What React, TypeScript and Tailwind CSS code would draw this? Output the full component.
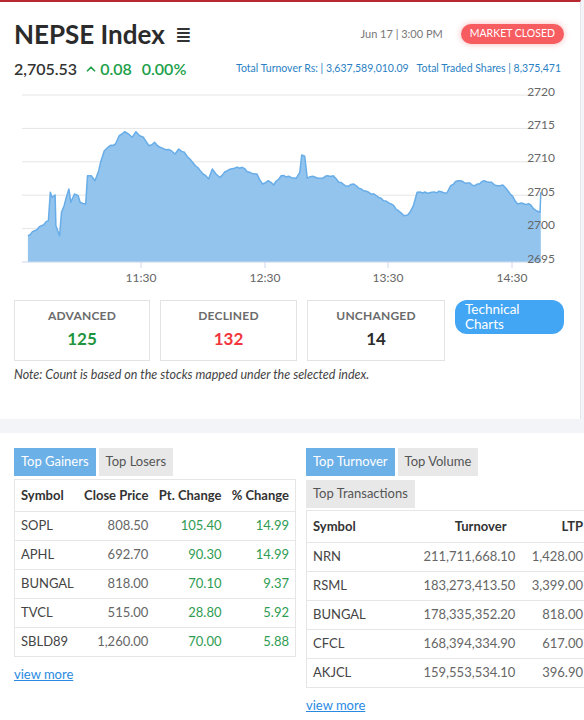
import { ChevronUp } from "lucide-react";

type GainerRow = {
  symbol: string;
  close: string;
  change: string;
  percent: string;
};

type TurnoverRow = {
  symbol: string;
  turnover: string;
  ltp: string;
};

const gainers: GainerRow[] = [
  { symbol: "SOPL", close: "808.50", change: "105.40", percent: "14.99" },
  { symbol: "APHL", close: "692.70", change: "90.30", percent: "14.99" },
  { symbol: "BUNGAL", close: "818.00", change: "70.10", percent: "9.37" },
  { symbol: "TVCL", close: "515.00", change: "28.80", percent: "5.92" },
  { symbol: "SBLD89", close: "1,260.00", change: "70.00", percent: "5.88" },
];

const turnovers: TurnoverRow[] = [
  { symbol: "NRN", turnover: "211,711,668.10", ltp: "1,428.00" },
  { symbol: "RSML", turnover: "183,273,413.50", ltp: "3,399.00" },
  { symbol: "BUNGAL", turnover: "178,335,352.20", ltp: "818.00" },
  { symbol: "CFCL", turnover: "168,394,334.90", ltp: "617.00" },
  { symbol: "AKJCL", turnover: "159,553,534.10", ltp: "396.90" },
];

// intraday index points, already in chart pixel space
const series: [number, number][] = [
  [27.9, 156.7], [48.4, 141.7], [50.3, 113.3], [52.1, 118.3], [55.1, 116],
  [55.9, 146.7], [59.6, 156.7], [61.5, 133.3], [64.1, 126.7], [68.9, 110],
  [70.8, 123.3], [74.5, 115], [78.2, 116.7], [80.1, 123.3], [85.7, 125],
  [87.5, 96.7], [91.2, 96.7], [95, 101.7], [98.7, 91.7], [100.6, 83.3],
  [104.3, 71.7], [108, 68.3], [115.5, 65], [119.2, 56.7], [124.8, 52.7],
  [128.5, 55], [132.2, 58.3], [135.9, 52.7], [139.7, 56.7], [143.4, 58.3],
  [149, 66.7], [154.6, 63.3], [160.1, 68.3], [165.7, 70.7], [171.3, 71.7],
  [175, 75], [178.8, 70], [184.4, 73.3], [189.9, 80], [195.5, 86.7],
  [203, 95], [208.6, 100], [212.3, 90], [216, 95], [219.7, 98.3],
  [227.2, 91.7], [234.6, 89.3], [242.1, 88.3], [249.5, 93.3], [257, 95],
  [262.6, 105], [268.2, 101.7], [273.7, 106], [281.2, 96.7], [288.6, 97.3],
  [296.1, 99.3], [299.8, 93.3], [301.7, 76], [304.7, 77.3], [307.3, 99.3],
  [312.8, 97.3], [320.3, 99.3], [327.7, 96.7], [333.3, 96.7], [338.9, 103.3],
  [348.2, 107.3], [353.8, 105], [361.3, 110], [368.7, 113.3], [376.2, 116.7],
  [383.6, 121.7], [391.1, 125], [398.5, 131.7], [404.1, 136.7], [407.8, 136],
  [413.4, 126.7], [417.1, 113.3], [422.7, 114], [432, 113.3], [441.3, 112.7],
  [446.9, 114], [450.7, 106.7], [458.1, 101.7], [467.4, 104], [474.9, 106.7],
  [484.2, 101.7], [491.6, 103.3], [497.2, 106.7], [502.8, 106], [510.2, 115],
  [517.7, 125], [521.4, 124], [530.7, 126], [536.3, 131.7], [540, 133.3],
  [540.8, 113.3],
];

const BASE_Y = 183;
const gridYs = [16, 49.4, 82.8, 116.2, 149.6, 183];
const yLabels = ["2720", "2715", "2710", "2705", "2700", "2695"];
const xTicks = [
  { x: 141, label: "11:30" },
  { x: 265, label: "12:30" },
  { x: 388, label: "13:30" },
  { x: 512, label: "14:30" },
];

// add a little tick-by-tick noise between the sampled points
function densify(points: [number, number][]) {
  const out: [number, number][] = [];
  for (let i = 0; i < points.length - 1; i++) {
    const [x0, y0] = points[i];
    const [x1, y1] = points[i + 1];
    out.push([x0, y0]);
    const steps = Math.max(0, Math.floor((x1 - x0) / 2.2));
    for (let s = 1; s < steps; s++) {
      const t = s / steps;
      const jitter = Math.sin(i * 7.3 + s * 2.1) * 0.9;
      out.push([x0 + (x1 - x0) * t, y0 + (y1 - y0) * t + jitter]);
    }
  }
  out.push(points[points.length - 1]);
  return out;
}

function IndexChart() {
  const pts = densify(series);
  const line = pts.map(([x, y], i) => `${i ? "L" : "M"}${x.toFixed(1)},${y.toFixed(1)}`).join(" ");
  const area = `${line} L${pts[pts.length - 1][0]},${BASE_Y} L${pts[0][0]},${BASE_Y} Z`;

  return (
    <svg width="584" height="212" viewBox="0 0 584 212" className="block">
      {gridYs.slice(0, 5).map((y) => (
        <line key={y} x1="22" x2="542" y1={y} y2={y} stroke="#e6e6e6" strokeWidth="1" />
      ))}
      <path d={area} fill="#92c4ee" />
      <path d={line} fill="none" stroke="#68ade8" strokeWidth="1.5" strokeLinejoin="round" />
      <line x1="22" x2="542" y1={BASE_Y} y2={BASE_Y} stroke="#ccd6eb" strokeWidth="1" />
      {xTicks.map((t) => (
        <g key={t.label}>
          <line x1={t.x} x2={t.x} y1={BASE_Y} y2={BASE_Y + 6} stroke="#ccd6eb" />
          <text x={t.x} y="203" textAnchor="middle" fontSize="12" fill="#666666">
            {t.label}
          </text>
        </g>
      ))}
      {gridYs.map((y, i) => (
        <text key={y} x="555" y={y + 0.5} textAnchor="end" fontSize="12" fill="#666666">
          {yLabels[i]}
        </text>
      ))}
    </svg>
  );
}

function StatBox({ label, value, color }: { label: string; value: string; color: string }) {
  return (
    <div className="flex h-[61px] flex-col items-center border border-[#e3e3e3] bg-white pt-[7px]">
      <div className="text-[12px] font-bold leading-4 tracking-[0.2px] text-[#6b6b6b]">{label}</div>
      <div className={`mt-[5px] text-[17px] font-bold leading-5 ${color}`}>{value}</div>
    </div>
  );
}

function Tab({ label, active }: { label: string; active?: boolean }) {
  return (
    <button
      type="button"
      className={
        active
          ? "h-[28px] bg-[#6cb0e8] px-[7px] text-[13px] text-white"
          : "h-[28px] bg-[#e8e8e8] px-[7px] text-[13px] text-[#555555]"
      }
    >
      {label}
    </button>
  );
}

export default function App() {
  return (
    <div className="h-[720px] w-[584px] overflow-hidden bg-[#f3f4f8] font-['Lato',sans-serif] text-[#333333]">
      {/* index summary card */}
      <div className="w-[581px] border-t-2 border-r border-t-[#b8292f] border-r-[#e4e6ec] bg-white pb-[36px]">
        <div className="mt-[15px] flex h-[34px] items-center justify-between pl-[14px] pr-[16px]">
          <div className="flex items-center gap-[10px]">
            <h1 className="text-[26px] font-bold leading-8 text-[#2b2b2b]">NEPSE Index</h1>
            <span className="text-[20px] leading-none text-[#333333]">≣</span>
          </div>
          <div className="flex items-center gap-[18px]">
            <span className="text-[11px] text-[#777777]">Jun 17 | 3:00 PM</span>
            <span className="flex h-[20px] items-center rounded-full bg-[#f65c60] px-[9px] text-[10.5px] text-white shadow-[0_0_6px_rgba(246,92,96,0.45)]">
              MARKET CLOSED
            </span>
          </div>
        </div>
        <div className="mt-[8px] flex h-[20px] items-center justify-between pl-[14px] pr-[19px]">
          <div className="flex items-center text-[16px] font-semibold">
            <span className="text-[#333333]">2,705.53</span>
            <ChevronUp className="ml-[7px] h-[14px] w-[14px] text-[#20a04a]" strokeWidth={3} />
            <span className="ml-[2px] text-[#20a04a]">0.08</span>
            <span className="ml-[10px] text-[#20a04a]">0.00%</span>
          </div>
          <div className="text-[10.5px] text-[#2a7fc4]">
            Total Turnover Rs: | 3,637,589,010.09
            <span className="ml-[8px]">Total Traded Shares | 8,375,471</span>
          </div>
        </div>
        <IndexChart />
        <div className="mt-[9px] grid grid-cols-[136px_137px_138px_109px] gap-[10px] px-[14px]">
          <StatBox label="ADVANCED" value="125" color="text-[#1e9440]" />
          <StatBox label="DECLINED" value="132" color="text-[#f2353b]" />
          <StatBox label="UNCHANGED" value="14" color="text-[#2b2b2b]" />
          <button
            type="button"
            className="flex h-[34px] flex-col items-start justify-center rounded-[12px] bg-[#42a6f5] px-[10px] text-left text-[13.5px] leading-[15px] text-white"
          >
            <span>Technical</span>
            <span>Charts</span>
          </button>
        </div>
        <p className="mt-[6px] px-[14px] text-[12.5px] italic leading-4 text-[#444444]">
          Note: Count is based on the stocks mapped under the selected index.
        </p>
      </div>

      {/* top movers */}
      <div className="mt-[14px] flex h-[300px] gap-[10px] bg-white pl-[14px] pt-[15px]">
        <div className="w-[282px] shrink-0">
          <div className="flex gap-[3px]">
            <Tab label="Top Gainers" active />
            <Tab label="Top Losers" />
          </div>
          <table className="mt-[3px] w-full border-collapse border border-[#e6e6e6] text-[13px]">
            <thead>
              <tr className="h-[32px]">
                <th className="pl-[6px] text-left font-bold text-[#333333]">Symbol</th>
                <th className="pr-[5px] text-right font-bold text-[#333333]">Close Price</th>
                <th className="pr-[5px] text-right font-bold text-[#333333]">Pt. Change</th>
                <th className="pr-[6px] text-right font-bold text-[#333333]">% Change</th>
              </tr>
            </thead>
            <tbody>
              {gainers.map((row) => (
                <tr key={row.symbol} className="h-[29px] border-t border-[#e6e6e6]">
                  <td className="pl-[6px] text-[#444444]">{row.symbol}</td>
                  <td className="pr-[5px] text-right text-[#666666]">{row.close}</td>
                  <td className="pr-[5px] text-right text-[#2e9c52]">{row.change}</td>
                  <td className="pr-[6px] text-right text-[#2e9c52]">{row.percent}</td>
                </tr>
              ))}
            </tbody>
          </table>
          <a href="#" className="mt-[8px] inline-block text-[13px] text-[#2a8ae2] underline">
            view more
          </a>
        </div>

        <div className="w-[283px] shrink-0">
          <div className="flex flex-wrap gap-x-[3px] gap-y-[4px]">
            <Tab label="Top Turnover" active />
            <Tab label="Top Volume" />
            <Tab label="Top Transactions" />
          </div>
          <table className="mt-[2px] w-full table-fixed border-collapse border border-[#e6e6e6] text-[13px]">
            <colgroup>
              <col className="w-[117px]" />
              <col className="w-[89px]" />
              <col className="w-[77px]" />
            </colgroup>
            <thead>
              <tr className="h-[32px]">
                <th className="pl-[6px] text-left font-bold text-[#333333]">Symbol</th>
                <th className="pr-[6px] text-right font-bold text-[#333333]">Turnover</th>
                <th className="pr-[6px] text-right font-bold text-[#333333]">LTP</th>
              </tr>
            </thead>
            <tbody>
              {turnovers.map((row) => (
                <tr key={row.symbol} className="h-[29px] border-t border-[#e6e6e6]">
                  <td className="pl-[6px] text-[#444444]">{row.symbol}</td>
                  <td className="pr-[6px] text-right whitespace-nowrap text-[#666666]">{row.turnover}</td>
                  <td className="pr-[6px] text-right text-[#666666]">{row.ltp}</td>
                </tr>
              ))}
            </tbody>
          </table>
          <a href="#" className="mt-[8px] inline-block text-[13px] text-[#2a8ae2] underline">
            view more
          </a>
        </div>
      </div>
    </div>
  );
}
